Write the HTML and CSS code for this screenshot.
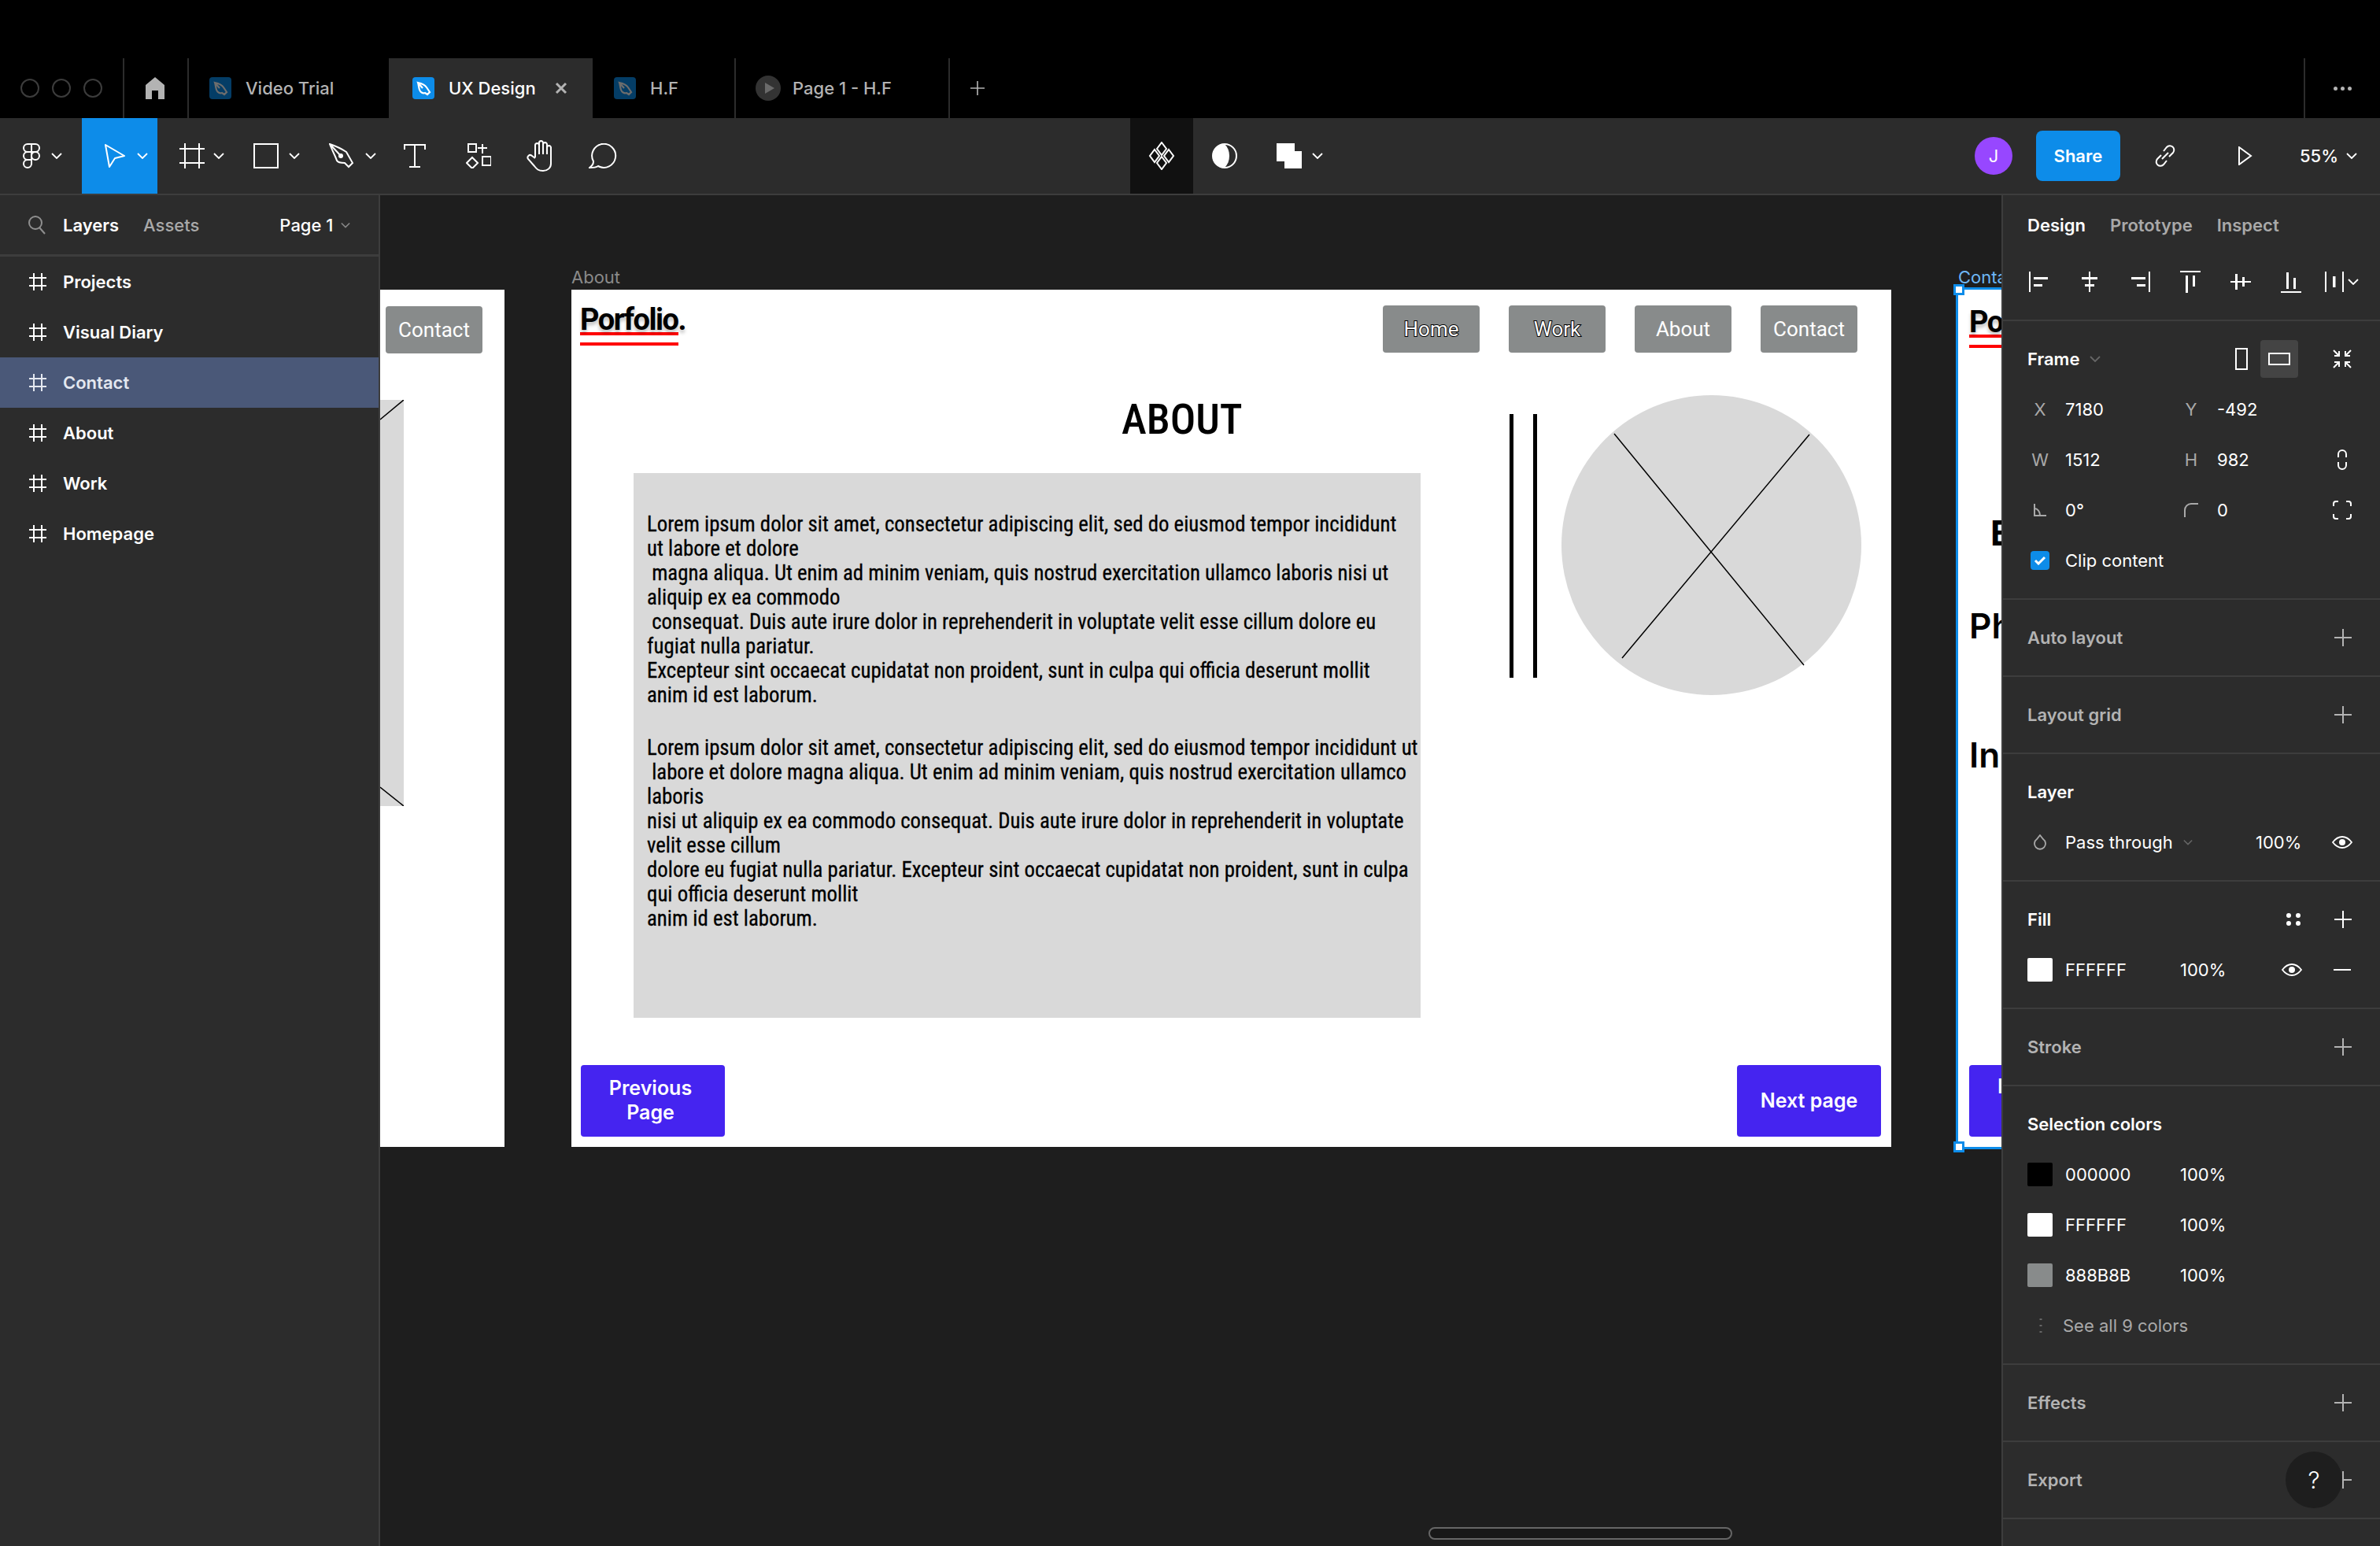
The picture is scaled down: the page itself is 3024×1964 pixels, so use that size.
FILE: index.html
```html
<!DOCTYPE html>
<html lang="en">
<head>
    <meta charset="UTF-8">
    <title>UX Design - Figma</title>
    <link rel="stylesheet" href="styles.css">
</head>
<body>
    <svg class="sprites" width="0" height="0">
        <symbol id="pen-nib" viewBox="0 0 28 28">
            <path d="M7 7c5 1 9 3 11 6l4 6-3 3-3-2c-3 1-6-1-7-4-1-3-1-6-2-9zM7 7l6 7" fill="none" stroke="currentColor" stroke-width="2.2"/>
        </symbol>
        <symbol id="chev" viewBox="0 0 14 8">
            <path d="M1 1l6 6 6-6" fill="none" stroke="currentColor" stroke-width="1.8"/>
        </symbol>
        <symbol id="hash" viewBox="0 0 22 22">
            <path d="M6 0v22M16 0v22M0 6h22M0 16h22" fill="none" stroke="currentColor" stroke-width="2"/>
        </symbol>
        <symbol id="plus" viewBox="0 0 22 22">
            <path d="M11 0v22M0 11h22" fill="none" stroke="currentColor" stroke-width="2"/>
        </symbol>
        <symbol id="eye" viewBox="0 0 26 16">
            <path d="M1 8c3-4 7-7 12-7s9 3 12 7c-3 4-7 7-12 7S4 12 1 8z" fill="none" stroke="currentColor" stroke-width="1.8"/>
            <circle cx="13" cy="8" r="4" fill="currentColor"/>
        </symbol>
    </svg>

    <div class="app">
        <header class="titlebar">
            <div class="traffic"><i></i><i></i><i></i></div>
            <div class="tab tab-home">
                <svg width="24" height="28" viewBox="0 0 24 28"><path d="M12 0l12 10v18h-8V17H8v11H0V10z" fill="#b3b3b3"/></svg>
            </div>
            <div class="tab tab-video">
                <span class="file-icon"><svg width="28" height="28"><use href="#pen-nib"/></svg></span>
                <span>Video Trial</span>
            </div>
            <div class="tab tab-active">
                <span class="file-icon file-icon-on"><svg width="28" height="28"><use href="#pen-nib"/></svg></span>
                <span>UX Design</span>
                <svg class="tab-close" width="16" height="16" viewBox="0 0 16 16"><path d="M2 2l12 12M14 2L2 14" fill="none" stroke="#b3b3b3" stroke-width="3"/></svg>
            </div>
            <div class="tab tab-hf">
                <span class="file-icon"><svg width="28" height="28"><use href="#pen-nib"/></svg></span>
                <span>H.F</span>
            </div>
            <div class="tab tab-page">
                <span class="play-icon"><svg width="12" height="14" viewBox="0 0 12 14"><path d="M0 0l12 7-12 7z" fill="#6a6a6a"/></svg></span>
                <span>Page 1 - H.F</span>
            </div>
            <div class="tab-add"><svg width="18" height="18"><use href="#plus"/></svg></div>
            <div class="title-more"><i></i><i></i><i></i></div>
        </header>

        <div class="toolbar">
            <div class="tool tool-logo">
                <svg width="24" height="34" viewBox="0 0 24 34"><path d="M12 2H7a5 5 0 0 0 0 10h5zM12 2h5a5 5 0 0 1 0 10h-5zM12 12H7a5 5 0 0 0 0 10h5zM7 22h5v5a5 5 0 1 1-5-5z" fill="none" stroke="#fff" stroke-width="2"/><circle cx="17" cy="17" r="5" fill="none" stroke="#fff" stroke-width="2"/></svg>
                <svg class="tool-chev" width="14" height="8"><use href="#chev"/></svg>
            </div>
            <div class="tool tool-select">
                <svg width="28" height="30" viewBox="0 0 28 30"><path d="M2 1l24 14-12 3-7 11z" fill="none" stroke="#fff" stroke-width="2" stroke-linejoin="round"/></svg>
                <svg class="tool-chev" width="14" height="8"><use href="#chev"/></svg>
            </div>
            <div class="tool tool-frame">
                <svg width="32" height="32" viewBox="0 0 32 32"><path d="M7 0v32M25 0v32M0 7h32M0 25h32" fill="none" stroke="#fff" stroke-width="2"/></svg>
                <svg class="tool-chev" width="14" height="8"><use href="#chev"/></svg>
            </div>
            <div class="tool tool-rect">
                <svg width="32" height="32" viewBox="0 0 32 32"><rect x="1" y="1" width="30" height="30" fill="none" stroke="#fff" stroke-width="2"/></svg>
                <svg class="tool-chev" width="14" height="8"><use href="#chev"/></svg>
            </div>
            <div class="tool tool-pen">
                <svg width="32" height="32" viewBox="0 0 32 32"><path d="M1 1c6 2 15 6 21 10l8 14-5 5-5-5c-5 0-9-1-10-3C8 16 4 9 1 1zM1 1l14 15" fill="none" stroke="#fff" stroke-width="2"/><circle cx="15" cy="16" r="3" fill="#fff"/></svg>
                <svg class="tool-chev" width="14" height="8"><use href="#chev"/></svg>
            </div>
            <div class="tool tool-text">
                <svg width="28" height="30" viewBox="0 0 28 30"><path d="M1 7V1h26v6M14 1v28M7 29h14" fill="none" stroke="#fff" stroke-width="2"/></svg>
            </div>
            <div class="tool tool-res">
                <svg width="32" height="32" viewBox="0 0 32 32"><path d="M3 1h10v10H3zM21 1v12M15 6h12M21 17h11v11H21zM8 18l7 7-7 7-7-7z" fill="none" stroke="#fff" stroke-width="2"/></svg>
            </div>
            <div class="tool tool-hand">
                <svg width="36" height="40" viewBox="0 0 36 40"><path d="M11 22V6.500a2.500 2.500 0 0 1 5 0V18M16 18V3.500a2.500 2.500 0 0 1 5 0V18M21 18V5.500a2.500 2.500 0 0 1 5 0V18M26 18V9.500a2.500 2.500 0 0 1 5 0V30c0 5-4 9-10 9-6 0-8-2-11-6l-8-9c-2-3 2-7 5-4l4 3" fill="none" stroke="#fff" stroke-width="2"/></svg>
            </div>
            <div class="tool tool-comment">
                <svg width="36" height="32" viewBox="0 0 36 32"><path d="M1 31c3-2 5-4 5-8a15 15 0 1 1 6 6c-3 2-7 2-11 2z" fill="none" stroke="#fff" stroke-width="2"/></svg>
            </div>

            <div class="tool-mid">
                <div class="tool-comp">
                    <svg width="36" height="36" viewBox="0 0 36 36"><path d="M18 1l6 8-6 8-6-8zM18 19l6 8-6 8-6-8zM9 10l6 8-6 8-6-8zM27 10l6 8-6 8-6-8z" fill="none" stroke="#fff" stroke-width="2"/></svg>
                </div>
                <svg class="tool-contrast" width="32" height="32" viewBox="0 0 32 32"><circle cx="16" cy="16" r="15" fill="none" stroke="#fff" stroke-width="2"/><path d="M16 1a15 15 0 0 0 0 30c4-4 6-9 6-15S20 5 16 1z" fill="#fff"/></svg>
                <svg class="tool-bool" width="32" height="32" viewBox="0 0 32 32"><path d="M0 0h23v10h9v22H10V23H0z" fill="#fff"/></svg>
                <svg class="tool-chev" width="14" height="8"><use href="#chev"/></svg>
            </div>

            <div class="tool-right">
                <span class="avatar">J</span>
                <span class="share-btn">Share</span>
                <svg class="link-icon" width="30" height="30" viewBox="0 0 30 30"><path d="M13 9l4-5a5 5 0 0 1 8 7l-5 5M17 21l-4 5a5 5 0 0 1-8-7l5-5M11 19l8-8" fill="none" stroke="#fff" stroke-width="2"/></svg>
                <svg class="play-btn" width="18" height="24" viewBox="0 0 18 24"><path d="M1 1l15 11L1 23z" fill="none" stroke="#fff" stroke-width="2"/></svg>
                <span class="zoom-val">55%</span>
                <svg class="tool-chev" width="14" height="8"><use href="#chev"/></svg>
            </div>
        </div>

        <div class="workspace">
            <aside class="layers">
                <div class="layers-head">
                    <svg class="search-icon" width="22" height="24" viewBox="0 0 22 24"><circle cx="9" cy="9" r="8" fill="none" stroke="#8f8f8f" stroke-width="2"/><path d="M14 15l7 8" stroke="#8f8f8f" stroke-width="2"/></svg>
                    <span class="on">Layers</span>
                    <span class="off">Assets</span>
                    <span class="page-pick">Page 1</span>
                    <svg class="page-chev" width="12" height="8"><use href="#chev"/></svg>
                </div>
                <ul class="layer-list">
                    <li><svg width="22" height="22"><use href="#hash"/></svg>Projects</li>
                    <li><svg width="22" height="22"><use href="#hash"/></svg>Visual Diary</li>
                    <li class="picked"><svg width="22" height="22"><use href="#hash"/></svg>Contact</li>
                    <li><svg width="22" height="22"><use href="#hash"/></svg>About</li>
                    <li><svg width="22" height="22"><use href="#hash"/></svg>Work</li>
                    <li><svg width="22" height="22"><use href="#hash"/></svg>Homepage</li>
                </ul>
            </aside>

            <main class="canvas">
                <!-- frames sit on the free canvas -->
                <section class="frame frame-left">
                    <div class="nav-btn">Contact</div>
                    <svg class="left-ph" width="30" height="516" viewBox="0 0 30 516"><rect width="30" height="516" fill="#d9d9d9"/><path d="M30 0L0 25M0 492l30 24" stroke="#000" stroke-width="1.500"/></svg>
                </section>

                <section class="frame frame-about">
                    <span class="frame-label">About</span>
                    <div class="frame-top">
                        <div class="logo">
                            <div class="logo-text">Porfolio.</div>
                            <div class="logo-line"></div>
                            <div class="logo-line logo-line2"></div>
                        </div>
                        <nav class="nav">
                            <div class="nav-btn nav-outline">Home</div>
                            <div class="nav-btn nav-outline">Work</div>
                            <div class="nav-btn">About</div>
                            <div class="nav-btn">Contact</div>
                        </nav>
                    </div>
                    <div class="frame-body">
                        <div class="body-left">
                            <h1 class="about-title">ABOUT</h1>
                            <div class="about-box">
                                <p>Lorem ipsum dolor sit amet, consectetur adipiscing elit, sed do eiusmod tempor incididunt
ut labore et dolore
 magna aliqua. Ut enim ad minim veniam, quis nostrud exercitation ullamco laboris nisi ut
aliquip ex ea commodo
 consequat. Duis aute irure dolor in reprehenderit in voluptate velit esse cillum dolore eu
fugiat nulla pariatur.
Excepteur sint occaecat cupidatat non proident, sunt in culpa qui officia deserunt mollit
anim id est laborum.</p>
                                <p>Lorem ipsum dolor sit amet, consectetur adipiscing elit, sed do eiusmod tempor incididunt ut
 labore et dolore magna aliqua. Ut enim ad minim veniam, quis nostrud exercitation ullamco
laboris
nisi ut aliquip ex ea commodo consequat. Duis aute irure dolor in reprehenderit in voluptate
velit esse cillum
dolore eu fugiat nulla pariatur. Excepteur sint occaecat cupidatat non proident, sunt in culpa
qui officia deserunt mollit
anim id est laborum.</p>
                            </div>
                        </div>
                        <div class="vlines"><i></i><i></i></div>
                        <svg class="photo" width="381" height="381" viewBox="0 0 381 381"><circle cx="190.500" cy="190.500" r="190.500" fill="#d9d9d9"/><path d="M67 49l241 294M315 50L77 334" stroke="#000" stroke-width="1.500"/></svg>
                    </div>
                    <div class="frame-foot">
                        <div class="page-btn page-btn-prev">Previous<br>Page</div>
                        <div class="page-btn">Next page</div>
                    </div>
                </section>

                <section class="frame frame-contact">
                    <span class="frame-label frame-label-on">Conta</span>
                    <i class="handle handle-top"></i>
                    <i class="handle handle-bottom"></i>
                    <div class="logo contact-logo">
                        <div class="logo-text">Po</div>
                        <div class="logo-line"></div>
                        <div class="logo-line logo-line2"></div>
                    </div>
                    <div class="contact-email">E</div>
                    <div class="contact-line">Ph</div>
                    <div class="contact-line contact-insta">In</div>
                    <div class="page-btn contact-btn">P</div>
                </section>

                <div class="scrollbar"></div>
            </main>

            <aside class="props">
                <div class="sec sec-top">
                    <div class="prop-tabs">
                        <span class="on">Design</span>
                        <span class="off">Prototype</span>
                        <span class="off">Inspect</span>
                    </div>
                    <div class="aligns">
                        <svg width="28" height="28" viewBox="0 0 28 28"><path d="M1 1h2v26H1zM7 8h18v3H7zM7 17h11v3H7z" fill="#fff"/></svg>
                        <svg width="28" height="28" viewBox="0 0 28 28"><path d="M13 1h2v26h-2zM4 8h20v3H4zM8 17h12v3H8z" fill="#fff"/></svg>
                        <svg width="28" height="28" viewBox="0 0 28 28"><path d="M25 1h2v26h-2zM3 8h18v3H3zM10 17h11v3H10z" fill="#fff"/></svg>
                        <svg width="28" height="28" viewBox="0 0 28 28"><path d="M1 0h26v2H1zM8 6h3v22H8zM17 6h3v14h-3z" fill="#fff"/></svg>
                        <svg width="28" height="28" viewBox="0 0 28 28"><path d="M1 13h26v2H1zM7 4h3v20H7zM16 8h3v12h-3z" fill="#fff"/></svg>
                        <svg width="28" height="28" viewBox="0 0 28 28"><path d="M1 26h26v2H1zM8 2h3v21H8zM17 9h3v14h-3z" fill="#fff"/></svg>
                        <div class="dist">
                            <svg width="26" height="28" viewBox="0 0 26 28"><path d="M1 1h2v26H1zM23 1h2v26h-2zM11 7h3.500v14H11z" fill="#fff"/></svg>
                            <svg width="14" height="8"><use href="#chev"/></svg>
                        </div>
                    </div>
                </div>

                <div class="sec">
                    <div class="row row-head">
                        <span class="sec-title">Frame</span>
                        <svg class="title-chev" width="14" height="8"><use href="#chev"/></svg>
                        <svg class="size-portrait" width="16" height="28" viewBox="0 0 16 28"><rect x="1" y="1" width="14" height="26" fill="none" stroke="#fff" stroke-width="2"/></svg>
                        <span class="size-land"><svg width="28" height="16" viewBox="0 0 28 16"><rect x="1" y="1" width="26" height="14" fill="none" stroke="#fff" stroke-width="2"/></svg></span>
                        <svg class="frame-fit" width="24" height="24" viewBox="0 0 24 24"><path d="M1 1l7 7M8 2v6H2M23 1l-7 7M16 2v6h6M1 23l7-7M8 22v-6H2M23 23l-7-7M16 22v-6h6" fill="none" stroke="#fff" stroke-width="2"/></svg>
                    </div>
                    <div class="row row-xy"><span class="lbl">X</span><span>7180</span><span class="lbl">Y</span><span>-492</span></div>
                    <div class="row row-xy"><span class="lbl">W</span><span>1512</span><span class="lbl">H</span><span>982</span>
                        <svg class="row-icon" width="14" height="28" viewBox="0 0 14 28"><path d="M2 11V7a5 5 0 0 1 10 0v4M2 17v4a5 5 0 0 0 10 0v-4" fill="none" stroke="#fff" stroke-width="2"/></svg>
                    </div>
                    <div class="row row-xy">
                        <svg class="row-lbl-icon" width="16" height="16" viewBox="0 0 16 16"><path d="M1 0v15h15M1 6c4 0 7 4 7 9" fill="none" stroke="#a9a9a9" stroke-width="2"/></svg>
                        <span>0°</span>
                        <svg class="row-lbl-icon" width="18" height="18" viewBox="0 0 18 18"><path d="M1 18V9a8 8 0 0 1 8-8h9" fill="none" stroke="#a9a9a9" stroke-width="2"/></svg>
                        <span>0</span>
                        <svg class="row-icon" width="24" height="24" viewBox="0 0 24 24"><path d="M1 7V4a3 3 0 0 1 3-3h3M17 1h3a3 3 0 0 1 3 3v3M23 17v3a3 3 0 0 1-3 3h-3M7 23H4a3 3 0 0 1-3-3v-3" fill="none" stroke="#fff" stroke-width="2"/></svg>
                    </div>
                    <div class="row row-clip">
                        <span class="check"><svg width="16" height="12" viewBox="0 0 16 12"><path d="M2 6l4 4 8-8" fill="none" stroke="#fff" stroke-width="3"/></svg></span>
                        <span>Clip content</span>
                    </div>
                </div>

                <div class="sec sec-bar"><span class="sec-title sec-dim">Auto layout</span><svg class="plus" width="22" height="22"><use href="#plus"/></svg></div>
                <div class="sec sec-bar"><span class="sec-title sec-dim">Layout grid</span><svg class="plus" width="22" height="22"><use href="#plus"/></svg></div>

                <div class="sec">
                    <div class="row row-head"><span class="sec-title">Layer</span></div>
                    <div class="row row-layer">
                        <svg class="layer-drop" width="16" height="20" viewBox="0 0 16 20"><path d="M8 1l4 5a7 7 0 1 1-8 0z" fill="none" stroke="#a9a9a9" stroke-width="1.800"/></svg>
                        <span class="layer-mode">Pass through<svg width="12" height="8"><use href="#chev"/></svg></span>
                        <span class="layer-pct">100%</span>
                        <svg class="eye-end" width="26" height="16"><use href="#eye"/></svg>
                    </div>
                </div>

                <div class="sec">
                    <div class="row row-head">
                        <span class="sec-title">Fill</span>
                        <svg class="styles-dots" width="18" height="16" viewBox="0 0 18 16"><circle cx="3" cy="3" r="3" fill="#fff"/><circle cx="15" cy="3" r="3" fill="#fff"/><circle cx="3" cy="13" r="3" fill="#fff"/><circle cx="15" cy="13" r="3" fill="#fff"/></svg>
                        <svg class="plus plus-fill" width="22" height="22"><use href="#plus"/></svg>
                    </div>
                    <div class="row row-color">
                        <i class="swatch swatch-white"></i><span>FFFFFF</span><span>100%</span>
                        <svg class="eye-mid" width="26" height="16"><use href="#eye"/></svg>
                        <svg class="minus" width="22" height="2" viewBox="0 0 22 2"><path d="M0 1h22" stroke="#fff" stroke-width="2"/></svg>
                    </div>
                </div>

                <div class="sec sec-bar"><span class="sec-title sec-dim">Stroke</span><svg class="plus" width="22" height="22"><use href="#plus"/></svg></div>

                <div class="sec">
                    <div class="row row-head"><span class="sec-title">Selection colors</span></div>
                    <div class="row row-color"><i class="swatch swatch-black"></i><span>000000</span><span>100%</span></div>
                    <div class="row row-color"><i class="swatch swatch-white"></i><span>FFFFFF</span><span>100%</span></div>
                    <div class="row row-color"><i class="swatch swatch-grey"></i><span>888B8B</span><span>100%</span></div>
                    <div class="row row-more">
                        <svg width="4" height="18" viewBox="0 0 4 18"><path d="M2 0v2M2 8v2M2 16v2" stroke="#666" stroke-width="3"/></svg>
                        <span>See all 9 colors</span>
                    </div>
                </div>

                <div class="sec sec-bar"><span class="sec-title sec-dim">Effects</span><svg class="plus" width="22" height="22"><use href="#plus"/></svg></div>
                <div class="sec sec-bar"><span class="sec-title sec-dim">Export</span><svg class="plus" width="22" height="22"><use href="#plus"/></svg></div>

                <div class="help">?</div>
            </aside>
        </div>
    </div>
</body>
</html>
```

FILE: styles.css
```css
* {
    box-sizing: border-box;
}
html, body {
    margin: 0;
    padding: 0;
    background: #000;
}
body {
    font-family: Inter, "Noto Sans", sans-serif;
    font-size: 22px;
    color: #fff;
}
.sprites {
    position: absolute;
}
.app {
    width: 3024px;
    height: 1964px;
    display: flex;
    flex-direction: column;
    overflow: hidden;
}

/* title bar */
.titlebar {
    height: 150px;
    padding-top: 74px;
    display: flex;
    background: #000;
    color: #b3b3b3;
    font-weight: 500;
}
.traffic {
    width: 158px;
    display: flex;
    align-items: center;
    padding-left: 26px;
    gap: 16px;
    border-right: 2px solid #2c2c2c;
}
.traffic i {
    width: 24px;
    height: 24px;
    border: 2px solid #3c3c3c;
    border-radius: 50%;
}
.tab {
    display: flex;
    align-items: center;
    border-right: 2px solid #2c2c2c;
}
.tab-home {
    width: 82px;
    padding-left: 27px;
}
.tab-video {
    width: 256px;
    padding-left: 26px;
    gap: 18px;
}
.tab-active {
    width: 257px;
    padding-left: 28px;
    gap: 18px;
    background: #2c2c2c;
    color: #fff;
    border-right: 0;
}
.tab-close {
    margin-left: 6px;
}
.tab-hf {
    width: 182px;
    padding-left: 27px;
    gap: 18px;
}
.tab-page {
    width: 272px;
    padding-left: 25px;
    gap: 15px;
}
.file-icon {
    width: 28px;
    height: 28px;
    border-radius: 4px;
    background: #043d66;
    color: #6d6d6d;
    display: flex;
}
.file-icon-on {
    background: #0d8ce9;
    color: #fff;
}
.play-icon {
    width: 32px;
    height: 32px;
    border-radius: 50%;
    background: #333;
    display: flex;
    align-items: center;
    justify-content: center;
    padding-left: 3px;
}
.tab-add {
    width: 70px;
    display: flex;
    align-items: center;
    padding-left: 26px;
    color: #b3b3b3;
}
.title-more {
    margin-left: auto;
    width: 97px;
    display: flex;
    align-items: center;
    justify-content: center;
    gap: 4px;
    border-left: 2px solid #2c2c2c;
}
.title-more i {
    width: 5px;
    height: 5px;
    border-radius: 50%;
    background: #b3b3b3;
}

/* toolbar */
.toolbar {
    height: 98px;
    display: flex;
    align-items: center;
    background: #2c2c2c;
    border-bottom: 2px solid #3d3d3d;
    position: relative;
}
.tool {
    display: flex;
    align-items: center;
    height: 96px;
}
.tool-chev {
    color: #fff;
}
.tool-logo {
    width: 104px;
    padding-left: 28px;
    gap: 13px;
}
.tool-select {
    width: 96px;
    padding-left: 28px;
    gap: 14px;
    background: #0d8ce9;
}
.tool-frame {
    width: 96px;
    padding-left: 28px;
    gap: 11px;
}
.tool-rect {
    width: 96px;
    padding-left: 26px;
    gap: 13px;
}
.tool-pen {
    width: 92px;
    padding-left: 26px;
    gap: 14px;
}
.tool-text {
    width: 108px;
    padding-left: 29px;
}
.tool-res {
    width: 77px;
}
.tool-hand {
    width: 79px;
}
.tool-mid {
    position: absolute;
    left: 1436px;
    top: 0;
    height: 96px;
    display: flex;
    align-items: center;
}
.tool-comp {
    width: 80px;
    height: 96px;
    background: #111;
    display: flex;
    align-items: center;
    justify-content: center;
}
.tool-contrast {
    margin-left: 24px;
}
.tool-bool {
    margin-left: 50px;
}
.tool-mid .tool-chev {
    margin-left: 13px;
}
.tool-right {
    margin-left: auto;
    display: flex;
    align-items: center;
    padding-right: 29px;
}
.avatar {
    width: 48px;
    height: 48px;
    border-radius: 50%;
    background: #9747ff;
    display: flex;
    align-items: center;
    justify-content: center;
    font-size: 22px;
}
.share-btn {
    margin-left: 30px;
    width: 107px;
    height: 64px;
    border-radius: 8px;
    background: #0d8ce9;
    display: flex;
    align-items: center;
    justify-content: center;
    font-weight: 600;
}
.link-icon {
    margin-left: 42px;
}
.play-btn {
    margin-left: 78px;
}
.zoom-val {
    margin-left: 60px;
    font-weight: 500;
}
.tool-right .tool-chev {
    margin-left: 10px;
}

/* main row */
.workspace {
    height: 1716px;
    display: flex;
}
.layers {
    width: 483px;
    background: #2c2c2c;
    border-right: 2px solid #3d3d3d;
    flex-shrink: 0;
}
.layers-head {
    height: 78px;
    display: flex;
    align-items: center;
    padding-left: 36px;
    border-bottom: 3px solid #3d3d3d;
    font-weight: 600;
}
.search-icon {
    margin-right: 22px;
}
.on {
    color: #fff;
}
.off {
    color: #a9a9a9;
}
.layers-head .off {
    margin-left: 31px;
    font-weight: 500;
}
.page-pick {
    margin-left: 102px;
    font-weight: 500;
}
.page-chev {
    margin-left: 10px;
    color: #888;
}
.layer-list {
    list-style: none;
    margin: 0;
    padding: 0;
}
.layer-list li {
    height: 64px;
    display: flex;
    align-items: center;
    gap: 21px;
    padding-left: 37px;
    font-weight: 600;
}
.layer-list .picked {
    background: #4a5878;
    color: #e4e8f0;
}

/* canvas */
.canvas {
    flex: 1;
    position: relative;
    overflow: hidden;
    background: #1e1e1e;
}
.frame {
    position: absolute;
    top: 120px;
    height: 1089px;
    background: #fff;
    color: #000;
    font-family: Roboto, sans-serif;
}
.frame-left {
    left: 0;
    width: 158px;
    padding: 21px 0 0 7px;
}
.left-ph {
    display: block;
    margin: 59px 0 0 -7px;
}
.frame-about {
    left: 243px;
    width: 1677px;
}
.frame-label {
    position: absolute;
    left: 0;
    bottom: 100%;
    margin-bottom: 3px;
    color: #8a8a8a;
    font-family: Inter, sans-serif;
    font-size: 22px;
    line-height: 26px;
    white-space: nowrap;
}
.frame-label-on {
    color: #6db6f5;
}
.frame-top {
    display: flex;
    justify-content: space-between;
    padding: 20px 43px 0 11px;
    height: 134px;
}
.logo-text {
    font-size: 38px;
    font-weight: 700;
    line-height: 40px;
    margin: -2px 0 -4px;
    letter-spacing: -1.500px;
    text-shadow: 0 4px 4px rgba(0, 0, 0, 0.25);
    white-space: nowrap;
}
.logo-line {
    width: 125px;
    height: 4px;
    background: #f00;
}
.logo-line2 {
    margin-top: 9px;
}
.nav {
    display: flex;
    gap: 37px;
}
.nav-btn {
    width: 123px;
    height: 60px;
    background: #888b8b;
    border-radius: 4px;
    color: #fff;
    font-size: 26px;
    display: flex;
    align-items: center;
    justify-content: center;
}
.nav-outline {
    -webkit-text-stroke: 2px #000;
    paint-order: stroke fill;
}
.frame-body {
    display: flex;
    height: 791px;
    padding-left: 79px;
}
.body-left {
    width: 1000px;
}
.about-title {
    margin: 1px 0 38px;
    padding-left: 620px;
    font-family: "Roboto Condensed", "Liberation Sans Narrow", Roboto, sans-serif;
    font-stretch: condensed;
    font-size: 54px;
    font-weight: 500;
    line-height: 60px;
}
.about-box {
    height: 692px;
    background: #d9d9d9;
    padding: 50px 0 0 17px;
    font-family: "Roboto Condensed", "Liberation Sans Narrow", Roboto, sans-serif;
    font-stretch: condensed;
    font-size: 26.800px;
    font-weight: 400;
    line-height: 31px;
    -webkit-text-stroke: 0.3px #000;
}
.about-box p {
    margin: 0 0 36px;
    white-space: pre;
}
.vlines {
    display: flex;
    gap: 25px;
    margin: 24px 0 0 113px;
    height: 335px;
}
.vlines i {
    width: 5px;
    background: #000;
}
.photo {
    margin-left: 31px;
}
.frame-foot {
    display: flex;
    justify-content: space-between;
    padding: 60px 13px 0 12px;
}
.page-btn {
    height: 91px;
    background: #4524f0;
    border-radius: 4px;
    color: #fff;
    font-family: Inter, sans-serif;
    font-size: 25px;
    font-weight: 600;
    line-height: 31px;
    text-align: center;
    display: flex;
    align-items: center;
    justify-content: center;
    width: 183px;
}
.page-btn-prev {
    padding: 0 6px 2px 0;
}
.frame-contact {
    left: 2005px;
    width: 1677px;
    box-shadow: 0 0 0 3px #0d8ce9;
}
.handle {
    position: absolute;
    left: -6px;
    width: 14px;
    height: 14px;
    background: #fff;
    border: 3px solid #0d8ce9;
}
.handle-top {
    top: -7px;
}
.handle-bottom {
    bottom: -7px;
}
.contact-logo {
    padding: 23px 0 0 14px;
}
.contact-email {
    position: absolute;
    left: 41px;
    top: 284px;
    font-family: Inter, sans-serif;
    font-size: 44px;
    font-weight: 700;
    line-height: 50px;
}
.contact-line {
    position: absolute;
    left: 14px;
    top: 402px;
    font-family: Inter, sans-serif;
    font-size: 44px;
    font-weight: 600;
    line-height: 50px;
}
.contact-insta {
    top: 566px;
}
.contact-btn {
    position: absolute;
    left: 14px;
    top: 985px;
    justify-content: flex-start;
    align-items: flex-start;
    padding: 12px 0 0 36px;
}
.scrollbar {
    position: absolute;
    left: 1332px;
    top: 1692px;
    width: 386px;
    height: 16px;
    border: 2px solid #666;
    border-radius: 8px;
    background: #181818;
}

/* right panel */
.props {
    width: 481px;
    flex-shrink: 0;
    position: relative;
    background: #2c2c2c;
    border-left: 2px solid #3d3d3d;
}
.sec {
    padding: 16px 0;
    border-bottom: 2px solid #3d3d3d;
}
.sec-top {
    padding: 0 0 14px;
}
.prop-tabs {
    height: 76px;
    display: flex;
    align-items: center;
    gap: 31px;
    padding-left: 31px;
    font-weight: 600;
}
.aligns {
    height: 68px;
    display: flex;
    align-items: center;
    padding-left: 32px;
    gap: 36px;
}
.dist {
    display: flex;
    align-items: center;
    margin-left: -8px;
    gap: 4px;
    color: #fff;
}
.row {
    height: 64px;
    display: flex;
    align-items: center;
    padding-left: 31px;
}
.sec-title {
    font-weight: 600;
}
.sec-dim {
    color: #b3b3b3;
}
.title-chev {
    margin-left: 13px;
    color: #666;
}
.size-portrait {
    margin-left: 171px;
}
.size-land {
    width: 48px;
    height: 48px;
    margin-left: 16px;
    background: #444;
    border-radius: 4px;
    display: flex;
    align-items: center;
    justify-content: center;
}
.frame-fit {
    margin-left: 44px;
}
.row-xy {
    display: grid;
    grid-template-columns: 32px 160px 32px 144px 64px;
}
.row-xy > :nth-child(2) {
    margin-left: 16px;
}
.row-xy > :nth-child(4) {
    margin-left: 17px;
}
.lbl {
    color: #a9a9a9;
    text-align: center;
}
.row-lbl-icon {
    justify-self: center;
}
.row-icon {
    justify-self: center;
    grid-column: 5;
}
.row-clip {
    padding-left: 35px;
    gap: 20px;
}
.check {
    width: 24px;
    height: 24px;
    border-radius: 4px;
    background: #0d8ce9;
    display: flex;
    align-items: center;
    justify-content: center;
}
.sec-bar {
    height: 98px;
    padding: 0 36px 0 31px;
    display: flex;
    align-items: center;
    justify-content: space-between;
}
.plus {
    color: #b3b3b3;
}
.plus-fill {
    color: #fff;
    margin-left: 43px;
    margin-right: 36px;
}
.styles-dots {
    margin-left: auto;
}
.row-layer {
    padding-left: 39px;
}
.layer-mode {
    width: 242px;
    margin-left: 24px;
    display: flex;
    align-items: center;
    gap: 13px;
    color: #fff;
}
.layer-mode svg {
    color: #666;
}
.layer-pct {
    width: 78px;
}
.eye-end {
    margin-left: 19px;
}
.row-color {
    display: grid;
    grid-template-columns: 48px 146px 110px 64px 64px;
}
.swatch {
    width: 32px;
    height: 30px;
    border-radius: 2px;
}
.swatch-white {
    background: #fff;
}
.swatch-black {
    background: #000;
}
.swatch-grey {
    background: #888b8b;
}
.eye-mid {
    justify-self: center;
}
.minus {
    justify-self: center;
}
.row-more {
    padding-left: 46px;
    gap: 26px;
    color: #a9a9a9;
}
.help {
    position: absolute;
    left: 359px;
    top: 1596px;
    width: 72px;
    height: 72px;
    border-radius: 50%;
    background: #1e1e1e;
    display: flex;
    align-items: center;
    justify-content: center;
    font-size: 30px;
    font-weight: 300;
}
```
